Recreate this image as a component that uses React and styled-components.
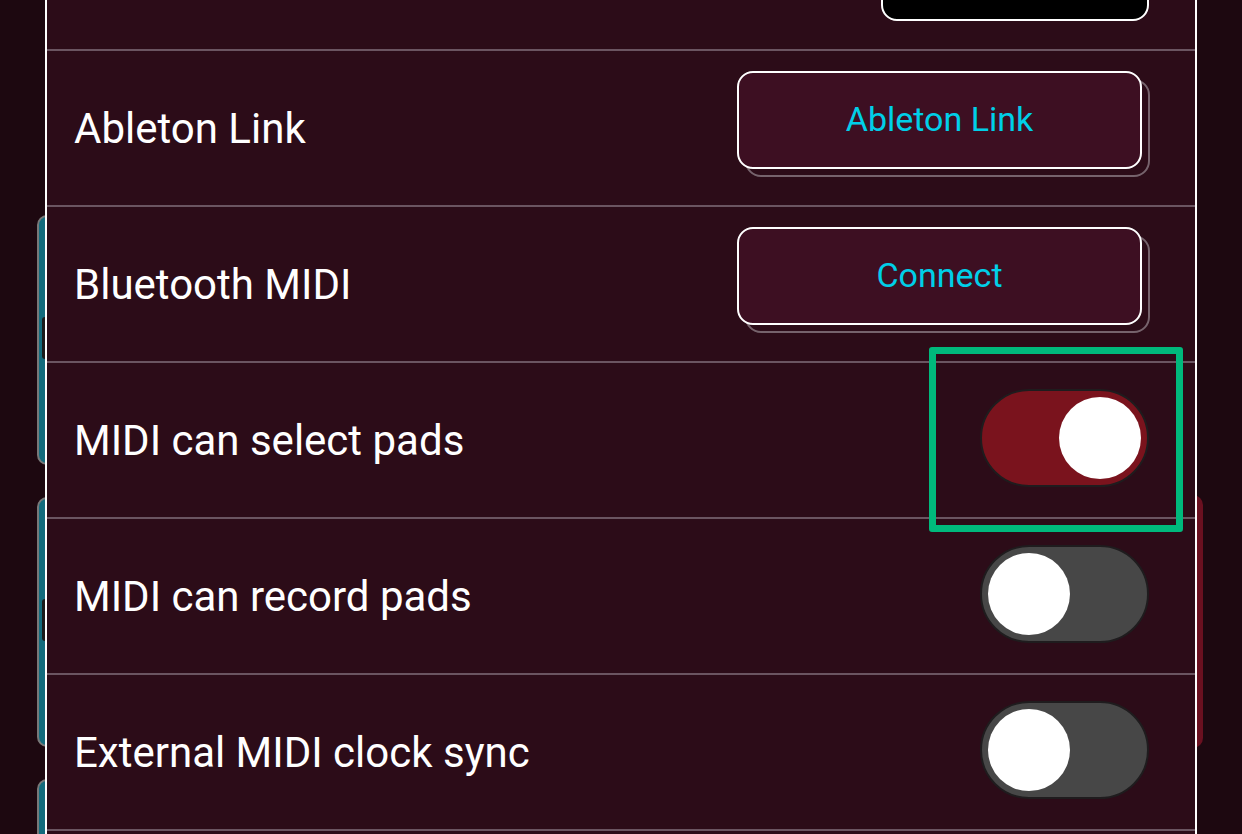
import React from 'react'
import styled, { createGlobalStyle } from 'styled-components'

const GlobalStyle = createGlobalStyle`
  html, body {
    margin: 0;
    padding: 0;
    background: #1d0810;
    overflow: hidden;
  }
  * { box-sizing: border-box; }
`

// first row is scrolled mostly out of view, so it has no visible label
const rows = [
  { id: 'color', label: '', kind: 'swatch' },
  { id: 'link', label: 'Ableton Link', kind: 'button', text: 'Ableton Link' },
  { id: 'ble', label: 'Bluetooth MIDI', kind: 'button', text: 'Connect' },
  { id: 'select', label: 'MIDI can select pads', kind: 'toggle', on: true },
  { id: 'record', label: 'MIDI can record pads', kind: 'toggle', on: false },
  { id: 'clock', label: 'External MIDI clock sync', kind: 'toggle', on: false },
]

function Toggle({ on }) {
  return (
    <Track role="switch" aria-checked={on} $on={on}>
      <Thumb />
    </Track>
  )
}

function App() {
  return (
    <Page>
      <GlobalStyle />
      <Backdrop>
        <PadColumn>
          <Pad><PadGlyph /></Pad>
          <Pad><PadGlyph /></Pad>
          <Pad />
        </PadColumn>
        <SideColumn>
          <SideCard />
        </SideColumn>
      </Backdrop>

      <Panel>
        <List>
          {rows.map((r) => (
            <Row key={r.id}>
              <Label>{r.label}</Label>
              {r.kind === 'swatch' && <Swatch />}
              {r.kind === 'button' && <Btn>{r.text}</Btn>}
              {r.kind === 'toggle' && <Toggle on={r.on} />}
            </Row>
          ))}
        </List>
      </Panel>

      <Highlight />
    </Page>
  )
}

export default App

const Page = styled.div`
  position: relative;
  width: 1242px;
  height: 834px;
  overflow: hidden;
  background: #1d0810;
  font-family: Roboto, "Noto Sans", sans-serif;
`

const Backdrop = styled.div`
  display: flex;
  justify-content: space-between;
  height: 100%;
`

const PadColumn = styled.div`
  display: flex;
  flex-direction: column;
  gap: 32px;
  padding: 215px 0 0 37px;
`

const Pad = styled.div`
  position: relative;
  width: 240px;
  height: 250px;
  flex-shrink: 0;
  background: #136b7d;
  border: 2px solid #787878;
  border-radius: 10px;
`

const PadGlyph = styled.div`
  position: absolute;
  left: 3px;
  top: 100px;
  width: 8px;
  height: 42px;
  background: #1b1b1b;
  border-radius: 3px;
`

const SideColumn = styled.div`
  padding: 495px 39px 0 0;
`

const SideCard = styled.div`
  width: 300px;
  height: 253px;
  background: #6a1020;
  border-radius: 10px;
`

const Panel = styled.div`
  position: absolute;
  z-index: 1;
  top: 0;
  left: 45px;
  width: 1152px;
  height: 834px;
  overflow: hidden;
  background: #2c0c18;
  border-left: 2px solid #ffffff;
  border-right: 2px solid #ffffff;
`

const List = styled.div`
  display: flex;
  flex-direction: column;
  margin-top: -105px;
`

const Row = styled.div`
  display: flex;
  align-items: center;
  justify-content: space-between;
  height: 156px;
  padding: 0 46px 0 27px;
  border-bottom: 2px solid #6b5561;
`

const Label = styled.span`
  color: #ffffff;
  font-size: 42px;
  font-weight: 400;
`

const Swatch = styled.div`
  width: 268px;
  height: 102px;
  margin-bottom: 4px;
  background: #000000;
  border: 2px solid #ffffff;
  border-radius: 16px;
`

const Btn = styled.button`
  position: relative;
  width: 405px;
  height: 98px;
  margin: 0 7px 16px 0;
  background: #3d0f22;
  border: 2px solid #ffffff;
  border-radius: 16px;
  color: #00cfe8;
  font-family: Roboto, "Noto Sans", sans-serif;
  font-size: 34px;
  padding: 0 0 2px;
  cursor: pointer;

  &::before {
    content: '';
    position: absolute;
    z-index: -1;
    top: 6px;
    left: 6px;
    right: -10px;
    bottom: -10px;
    border: 2px solid #76636c;
    border-radius: 16px;
  }
`

const Track = styled.button`
  display: flex;
  align-items: center;
  justify-content: ${(p) => (p.$on ? 'flex-end' : 'flex-start')};
  width: 169px;
  height: 98px;
  margin-bottom: 4px;
  padding: 0 6px;
  border: 2px solid #1f1c1e;
  border-radius: 49px;
  background: ${(p) => (p.$on ? '#7a131d' : '#474747')};
  cursor: pointer;
`

const Thumb = styled.span`
  width: 82px;
  height: 82px;
  border-radius: 50%;
  background: #ffffff;
`

const Highlight = styled.div`
  position: absolute;
  z-index: 2;
  left: 929px;
  top: 347px;
  width: 254px;
  height: 185px;
  border: 7px solid #00b97c;
  border-radius: 3px;
`
